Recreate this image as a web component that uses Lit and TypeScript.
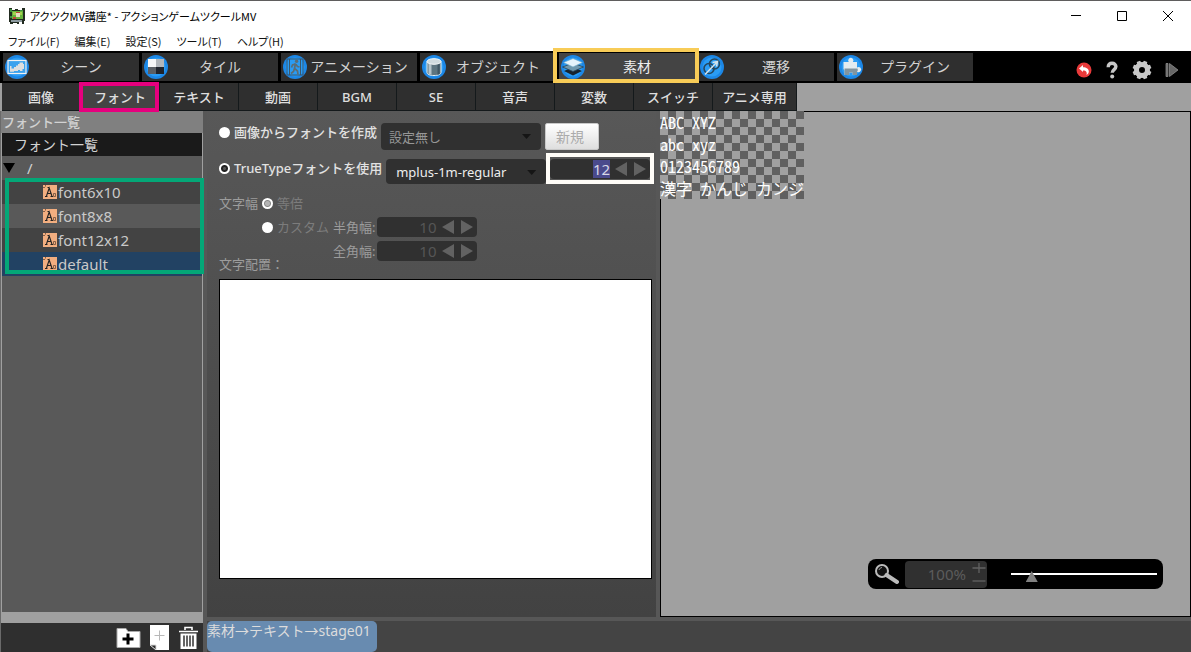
import { LitElement, html, css, svg, TemplateResult } from "lit";
import { customElement, state, query } from "lit/decorators.js";
import { classMap } from "lit/directives/class-map.js";

const disc = (art: unknown) => html`
  <svg class="tab-icon" width="24" height="24" viewBox="0 0 24 24" aria-hidden="true">
    <circle cx="12" cy="12" r="12" fill="#1c87e6" />
    <circle cx="12" cy="12" r="9.5" fill="#2a9cf4" />
    ${art}
  </svg>
`;

const sceneIcon = disc(svg`
  <rect x="3" y="5.500" width="18" height="13" fill="#3ba2ee" stroke="#f2f2f2" stroke-width="1.200" />
  <path d="M5 11h1.500v2.500H9V12h2v-1.500h2V9h1.500V7.500H18V9h1v5h-1.500v2H15v-1h-2v1H9v.800H5z" fill="#dedede" />
`);
const tileIcon = disc(svg`
  <rect x="4" y="4" width="8" height="8" fill="#f6f6f6" />
  <rect x="12" y="4" width="8" height="8" fill="#b2b6ba" />
  <rect x="4" y="12" width="8" height="7" fill="#5b5f64" />
  <rect x="12" y="12" width="8" height="7" fill="#20242b" />
`);
const animeIcon = disc(svg`
  <path d="M4 4h16v16H4zM6.500 4v16M17.500 4v16" fill="none" stroke="#3a586e" stroke-width="1" />
  <circle cx="13.600" cy="6.200" r="1.700" fill="#5b6d76" />
  <path d="M12.500 8.500l-1 5 3 2.500.5 3.500M11.500 13.500l-1 3-2.500 2M12.500 9l-3 1-1 2.500M13 9.500l1.500 2 2 .3" fill="none" stroke="#5b6d76" stroke-width="1.700" />
`);
const objectIcon = disc(svg`
  <path d="M5 6.500v11c0 1.800 3 3 7 3s7-1.200 7-3v-11z" fill="#5d7580" stroke="#e4edf0" stroke-width="1" />
  <path d="M6.500 8.500v10.300l3 .9V9.500z" fill="#b4c3ca" />
  <path d="M15.500 9v11l2.200-1V8.500z" fill="#3f5663" />
  <ellipse cx="12" cy="6.500" rx="7" ry="2.800" fill="#cfdade" stroke="#f5f9fa" stroke-width="1" />
`);
const materialIcon = disc(svg`
  <path d="M3 16l9-4 9 4-9 4.500z" fill="#17242f" />
  <path d="M1.500 12L12 8l10.500 4L12 16.500z" fill="#6f98ad" stroke="#24435a" stroke-width=".8" />
  <path d="M2.500 7.500L12 3.500l9.500 4L12 12z" fill="#e4f3fb" stroke="#6aa5c2" stroke-width=".6" />
`);
const transitionIcon = disc(svg`
  <circle cx="14.500" cy="9" r="5" fill="none" stroke="#25465e" stroke-width="1.600" />
  <circle cx="9" cy="13.500" r="5" fill="none" stroke="#25465e" stroke-width="1.600" />
  <path d="M5 19.500L17 7M12.500 7.500L17.500 6.500l-1 5" fill="none" stroke="#d3e2eb" stroke-width="1.500" />
`);
const pluginIcon = disc(svg`
  <path d="M4.500 7h5.200a2.600 2.600 0 1 1 4.200 0H18v5.500a2.600 2.600 0 1 1 0 4.200V20h-4.300v-2.500h-3.500V20H5.500v-4.500l-1-1.500z" fill="#e4ecef" />
  <path d="M5.500 13.500H18.500a2.600 2.600 0 0 1-.5 3.200V20h-4.300v-2.500h-3.500V20H5.500z" fill="#8195a0" />
`);

interface MainTab {
  label: string;
  icon: TemplateResult;
}

const mainTabs: MainTab[] = [
  { label: "シーン", icon: sceneIcon },
  { label: "タイル", icon: tileIcon },
  { label: "アニメーション", icon: animeIcon },
  { label: "オブジェクト", icon: objectIcon },
  { label: "素材", icon: materialIcon },
  { label: "遷移", icon: transitionIcon },
  { label: "プラグイン", icon: pluginIcon },
];

const subTabs = ["画像", "フォント", "テキスト", "動画", "BGM", "SE", "音声", "変数", "スイッチ", "アニメ専用"];
const menus = ["ファイル(F)", "編集(E)", "設定(S)", "ツール(T)", "ヘルプ(H)"];
const fonts = ["font6x10", "font8x8", "font12x12", "default"];

const controlReset = css`
  * {
    box-sizing: border-box;
  }
  button,
  input,
  select {
    margin: 0;
    padding: 0;
    border: 0;
    background: none;
    font: inherit;
    color: inherit;
    opacity: 1;
  }
  svg {
    display: block;
    flex: none;
  }
`;

@customElement("number-spinner")
class NumberSpinner extends LitElement {
  static properties = {
    value: { type: String },
    label: { type: String },
    disabled: { type: Boolean },
    preselect: { type: Boolean },
  };
  declare value: string;
  declare label: string;
  declare disabled: boolean;
  declare preselect: boolean;

  static styles = [
    controlReset,
    css`
      :host {
        display: block;
        width: 100px;
      }
      .spin {
        display: flex;
        align-items: center;
        height: 20px;
        padding-right: 4px;
        border-radius: 4px;
        background: #303030;
        color: #565656;
      }
      .field {
        flex: 1;
        min-width: 0;
        height: 18px;
        line-height: 18px;
        font-size: 15px;
        text-align: right;
        margin-right: 5px;
        outline: none;
      }
      .active {
        color: #d8d8e8;
      }
      .field::selection {
        background: #4a4a8c;
        color: #d8d8e8;
      }
      .step {
        width: 12px;
        height: 14px;
        color: #626262;
      }
      .next {
        margin-left: 7px;
      }
    `,
  ];

  @query(".field") field!: HTMLInputElement;

  firstUpdated() {
    if (this.preselect) {
      this.field.focus();
      this.field.select();
    }
  }

  render() {
    return html`
      <div class="spin">
        <input
          class=${classMap({ field: true, active: !this.disabled })}
          type="text"
          inputmode="numeric"
          aria-label=${this.label}
          .value=${this.value}
          ?disabled=${this.disabled}
        />
        <button class="step" type="button" aria-label="減らす" ?disabled=${this.disabled}>
          <svg width="12" height="14" viewBox="0 0 12 14"><path d="M12 0v14L0 7z" fill="currentColor" /></svg>
        </button>
        <button class="step next" type="button" aria-label="増やす" ?disabled=${this.disabled}>
          <svg width="12" height="14" viewBox="0 0 12 14"><path d="M0 0v14l12-7z" fill="currentColor" /></svg>
        </button>
      </div>
    `;
  }
}

@customElement("app-root")
class AppRoot extends LitElement {
  @state() mainTab = 4;
  @state() subTab = 1;
  @state() selectedFont = 3;

  static styles = [
    controlReset,
    css`
      :host {
        display: flex;
        flex-direction: column;
        height: 100vh;
        overflow: hidden;
        background: #575757;
        color: #d2d2d2;
        font-family: "Noto Sans", "Noto Sans CJK JP", sans-serif;
        font-size: 13px;
        line-height: 20px;
      }

      .titlebar {
        display: flex;
        align-items: center;
        flex: none;
        height: 31px;
        padding-left: 9px;
        border-top: 1px solid #5f5d5d;
        background: #fff;
        color: #000;
      }
      .title {
        flex: 1;
        margin: 0 0 0 5px;
        font-family: "Noto Sans CJK JP", sans-serif;
        font-size: 11px;
        font-weight: 400;
        font-feature-settings: "palt";
      }
      .window-button {
        display: grid;
        place-items: center;
        width: 46px;
        height: 30px;
      }
      .menubar {
        display: flex;
        flex: none;
        gap: 15px;
        height: 20px;
        padding-left: 8px;
        background: #fff;
        color: #111;
        font-family: "Noto Sans CJK JP", sans-serif;
        font-size: 11px;
        font-feature-settings: "palt";
      }

      .toolbar {
        display: flex;
        flex: none;
        gap: 3px;
        height: 32px;
        padding: 2px 12px 2px 3px;
        background: #000;
      }
      .main-tab {
        position: relative;
        display: flex;
        align-items: center;
        flex: 0 1 136px;
        height: 28px;
        padding-left: 2px;
        background: #2f2f2f;
        font-size: 14px;
        white-space: nowrap;
      }
      .main-tab.on {
        z-index: 1;
        background: #444;
        color: #eee;
      }
      .main-tab.on::after {
        content: "";
        position: absolute;
        inset: -5px -4px -2px -6px;
        border: 4px solid #f8cc57;
      }
      .main-tab .tab-icon {
        margin-right: -6px;
      }
      .tab-label {
        flex: 1;
        text-align: center;
      }
      .tools {
        display: flex;
        align-items: center;
        gap: 13px;
        margin-left: auto;
        padding-top: 6px;
      }

      .subtabs {
        display: flex;
        flex: none;
        height: 28px;
        padding-left: 2px;
        background: #a0a0a0;
      }
      .sub-tab {
        position: relative;
        flex: 0 1 79px;
        background: #2f2f2f;
        border-right: 1px solid #14191b;
        border-bottom: 1px solid #14191b;
        font-weight: 500;
        color: #dedede;
        white-space: nowrap;
      }
      .sub-tab:last-child {
        flex-basis: 84px;
      }
      .sub-tab.on {
        z-index: 1;
        background: #444;
      }
      .sub-tab.on::after {
        content: "";
        position: absolute;
        inset: -1px 0 -2px -2px;
        border: 4px solid #e6007e;
      }

      .workspace {
        display: grid;
        grid-template-columns: 203px 457px minmax(0, 1fr);
        grid-template-rows: minmax(0, 1fr) auto;
        flex: 1;
        min-height: 0;
      }

      .browser {
        display: flex;
        flex-direction: column;
        grid-row: 1 / 3;
        border-left: 1px solid #6a6a6a;
      }
      .browser-title {
        margin: 0;
        height: 22px;
        padding-left: 1px;
        background: #808080;
        font-size: 13px;
        font-weight: 500;
        line-height: 22px;
      }
      .browser-body {
        flex: 1;
        border: solid #a0a0a0;
        border-width: 0 1px 11px 1px;
        background: #595959;
      }
      .list-title {
        height: 23px;
        padding-left: 12px;
        background: #1a1a1a;
        font-size: 14px;
        line-height: 23px;
      }
      .folder {
        display: flex;
        align-items: center;
        gap: 12px;
        width: 100%;
        height: 24px;
        padding-left: 1px;
        font-size: 15px;
      }
      .files {
        position: relative;
        margin: 0;
        padding: 0;
        list-style: none;
      }
      .files::after {
        content: "";
        position: absolute;
        inset: -2px -2px 2px 3px;
        border: 4px solid #04a777;
        pointer-events: none;
      }
      .file {
        display: flex;
        align-items: center;
        gap: 1px;
        width: 100%;
        height: 24px;
        padding: 0 0 1px 41px;
        background: #434343;
        font-size: 15px;
        color: #c9c9c9;
      }
      .files li:nth-child(even) .file {
        background: #595959;
      }
      .files li .file.on {
        background: #224263;
      }
      .browser-tools {
        display: flex;
        align-items: center;
        justify-content: flex-end;
        gap: 9px;
        flex: none;
        height: 29px;
        padding-right: 4px;
        background: #2f2f2f;
      }

      .center {
        display: flex;
        flex-direction: column;
        min-height: 0;
        padding: 0 4px;
      }
      .editor {
        display: flex;
        flex-direction: column;
        flex: 1;
        padding: 12px 4px 38px 12px;
        background: linear-gradient(#585858, #424242);
      }
      .row {
        display: flex;
        align-items: flex-start;
        gap: 4px;
      }
      .row + .row {
        margin-top: 9px;
      }
      .choice {
        display: flex;
        align-items: center;
        gap: 4px;
        height: 18px;
        white-space: nowrap;
      }
      .strong {
        font-weight: 500;
        color: #e2e2e2;
      }
      .radio {
        appearance: none;
        flex: none;
        width: 11px;
        height: 11px;
        border-radius: 50%;
        background: #fff;
      }
      .radio:checked {
        background: radial-gradient(circle, #555 0 1px, #222 2px 3px, #fff 4px);
      }
      .radio:checked:disabled {
        background: radial-gradient(circle, #b4b4b4 0 2px, #888 3px, #fff 4px);
      }
      .picker {
        position: relative;
        flex: none;
        width: 160px;
      }
      .picker::after {
        content: "";
        position: absolute;
        right: 10px;
        top: 11px;
        width: 9px;
        height: 5px;
        background: #151515;
        clip-path: polygon(0 0, 100% 0, 50% 100%);
        pointer-events: none;
      }
      .select {
        appearance: none;
        display: block;
        width: 100%;
        height: 27px;
        padding: 0 24px 0 8px;
        border-radius: 4px;
        background: #303030;
        color: #969696;
      }
      .select.live {
        height: 25px;
        padding-left: 10px;
        color: #eee;
      }
      .new {
        width: 54px;
        height: 27px;
        padding-right: 4px;
        border: 1px solid #c9c9c9;
        border-radius: 2px;
        background: linear-gradient(#fff, #dedede);
        color: #ababab;
        font-size: 14px;
      }
      .marked {
        position: relative;
      }
      .marked::after {
        content: "";
        position: absolute;
        inset: -6px -4px -5px -4px;
        border: 4px solid #fffdf8;
        pointer-events: none;
      }
      .widths {
        display: grid;
        grid-template-columns: auto auto auto auto;
        grid-auto-rows: 20px;
        align-items: center;
        justify-content: start;
        row-gap: 4px;
        margin-top: 9px;
        color: #9c9c9c;
      }
      .widths .choice {
        margin: 0 4px;
        color: #7c7c7c;
      }
      .col-two {
        grid-column: 2;
      }
      .col-three {
        grid-column: 3;
        padding-right: 1px;
      }
      .layout-title {
        margin: -7px 0 5px;
        color: #9c9c9c;
      }
      .layout-area {
        flex: 1;
        min-height: 0;
        border: 1px solid #000;
        background: #fff;
      }
      .preview {
        position: relative;
        min-height: 0;
        border: 1px solid #000;
        background: #a0a0a0;
      }
      .sample {
        position: absolute;
        left: -1px;
        top: -1px;
        width: 144px;
        height: 88px;
        background: repeating-conic-gradient(#606060 0 25%, #a0a0a0 0 50%) 0 0 / 16px 16px;
        color: #fff;
        font-family: "Noto Sans CJK JP", sans-serif;
        font-feature-settings: "hwid";
        font-size: 16px;
        line-height: 22px;
        white-space: nowrap;
      }
      .sample p {
        display: flex;
        gap: 8px;
        margin: 0;
        height: 22px;
      }
      .sample .kana {
        font-feature-settings: normal;
      }
      .zoombar {
        position: absolute;
        right: 27px;
        bottom: 27px;
        display: flex;
        align-items: center;
        width: 295px;
        height: 30px;
        padding: 0 6px;
        border-radius: 8px;
        background: #000;
      }
      .zoom-field {
        display: flex;
        flex: none;
        width: 82px;
        height: 27px;
        margin: 0 24px 0 6px;
        border-radius: 4px;
        background: #303030;
        color: #5c5c5c;
      }
      .zoom-value {
        width: 61px;
        margin-right: 6px;
        text-align: right;
        font-size: 15px;
      }
      .zoom-steps {
        display: flex;
        flex-direction: column;
      }
      .zoom-slider {
        appearance: none;
        flex: 1;
        min-width: 0;
        height: 24px;
      }
      .zoom-slider::-webkit-slider-runnable-track {
        height: 2px;
        background: #fff;
      }
      .zoom-slider::-webkit-slider-thumb {
        appearance: none;
        width: 12px;
        height: 11px;
        margin-top: -2px;
        background: #808080;
        clip-path: polygon(50% 0, 100% 100%, 0 100%);
      }
      .status {
        grid-column: 2 / -1;
        margin: 4px 0 0 4px;
        height: 31px;
        background: #444;
      }
      .toast {
        display: inline-block;
        height: 31px;
        padding: 0 6px 0 0;
        border-radius: 5px;
        background: #688bb0;
        color: #dcdcdc;
        font-size: 14px;
      }
    `,
  ];

  renderTitlebar() {
    return html`
      <header class="titlebar">
        <svg width="16" height="16" viewBox="0 0 16 16" aria-hidden="true">
          <path d="M0 0h3v2h3V1h3v1h4V0h3v13h-1v3h-2v-2h-3v2H8v-1H4v1H1v-2H0z" fill="#222b20" />
          <path d="M1 1h2v3H1zM11 2h3v2h-3zM1 8h2v2H1z" fill="#3e8e3d" />
          <path d="M3 3h11v8H3z" fill="#67b53d" />
          <path d="M4 4h9v3H4z" fill="#a3d14f" />
          <path d="M7 5h4v4H7z" fill="#e8dcc1" />
          <path d="M7 4h4v1H7zM4 9h3v2H4z" fill="#bd4734" />
          <path d="M2 12h11v2H2z" fill="#8d9aa0" />
        </svg>
        <h1 class="title">アクツクMV講座* - アクションゲームツクールMV</h1>
        <button class="window-button" type="button" aria-label="最小化">
          <svg width="10" height="10" viewBox="0 0 10 10"><path d="M0 4.500h10" stroke="#000" /></svg>
        </button>
        <button class="window-button" type="button" aria-label="最大化">
          <svg width="10" height="10" viewBox="0 0 10 10"><path d="M.5.5h9v9h-9z" fill="none" stroke="#000" /></svg>
        </button>
        <button class="window-button" type="button" aria-label="閉じる">
          <svg width="10" height="10" viewBox="0 0 10 10"><path d="M0 0l10 10M10 0L0 10" stroke="#000" /></svg>
        </button>
      </header>
      <nav class="menubar">${menus.map((m) => html`<button type="button">${m}</button>`)}</nav>
    `;
  }

  renderToolbar() {
    return html`
      <nav class="toolbar">
        ${mainTabs.map(
          (tab, i) => html`
            <button
              type="button"
              class=${classMap({ "main-tab": true, on: i === this.mainTab })}
              @click=${() => (this.mainTab = i)}
            >
              ${tab.icon}<span class="tab-label">${tab.label}</span>
            </button>
          `
        )}
        <div class="tools">
          <button type="button" aria-label="元に戻す">
            <svg width="16" height="16" viewBox="0 0 16 16">
              <circle cx="8" cy="8" r="7.500" fill="#e93a3a" />
              <path d="M3 6.500L7 3v2.200c3.500 0 5.800 1.600 5.800 4.300 0 1.500-.8 2.700-2.300 3.500.8-2.500-.2-4.500-3.500-4.500V10z" fill="#fff" />
            </svg>
          </button>
          <button type="button" aria-label="ヘルプ">
            <svg width="14" height="18" viewBox="0 0 14 18">
              <path d="M3.200 6.200C3.200 3.600 4.600 2.300 7 2.300s3.900 1.300 3.900 3.300c0 3-3.700 3-3.700 6.200" fill="none" stroke="#c8c8c8" stroke-width="3.400" />
              <circle cx="7.200" cy="15.400" r="2" fill="#c8c8c8" />
            </svg>
          </button>
          <button type="button" aria-label="環境設定">
            <svg width="20" height="20" viewBox="0 0 20 20">
              <circle cx="10" cy="10" r="5.500" fill="none" stroke="#c8c8c8" stroke-width="5" />
              <g fill="#c8c8c8">
                ${[0, 45, 90, 135, 180, 225, 270, 315].map(
                  (a) => svg`<path d="M7.600 4L8.200.600h3.600l.6 3.400z" transform="rotate(${a + 22.5} 10 10)" />`
                )}
              </g>
            </svg>
          </button>
          <button type="button" aria-label="テストプレイ">
            <svg width="14" height="14" viewBox="0 0 14 14">
              <path d="M1 .5h2v13H1zM4.500.500L13 7l-8.500 6.500z" fill="#666" stroke="#999" stroke-width=".7" />
            </svg>
          </button>
        </div>
      </nav>
      <nav class="subtabs">
        ${subTabs.map(
          (label, i) => html`
            <button
              type="button"
              class=${classMap({ "sub-tab": true, on: i === this.subTab })}
              @click=${() => (this.subTab = i)}
            >
              ${label}
            </button>
          `
        )}
      </nav>
    `;
  }

  renderBrowser() {
    return html`
      <aside class="browser">
        <h2 class="browser-title">フォント一覧</h2>
        <div class="browser-body">
          <div class="list-title">フォント一覧</div>
          <button class="folder" type="button">
            <svg width="12" height="10" viewBox="0 0 12 10"><path d="M0 0h12L6 10z" fill="#000" /></svg>
            <span>/</span>
          </button>
          <ul class="files">
            ${fonts.map(
              (name, i) => html`
                <li>
                  <button
                    type="button"
                    class=${classMap({ file: true, on: i === this.selectedFont })}
                    @click=${() => (this.selectedFont = i)}
                  >
                    <svg width="14" height="14" viewBox="0 0 14 14" aria-hidden="true">
                      <path d="M0 0h14v14H0z" fill="#f2ae80" />
                      <path d="M2 11.500h2.500M7.500 11.500H10M3.500 11L6.200 3l2.700 8M4.500 8.500h3.500M4.500 2.500h2" fill="none" stroke="#222" stroke-width="1.100" />
                      <path d="M10.500 8.500h2v3h-2zM0 2.500h2M2.500 0v1.500" fill="none" stroke="#6b4b38" stroke-width=".8" />
                    </svg>
                    <span>${name}</span>
                  </button>
                </li>
              `
            )}
          </ul>
        </div>
        <div class="browser-tools">
          <button type="button" aria-label="フォルダを追加">
            <svg width="25" height="22" viewBox="0 0 25 22">
              <path d="M1 1.500h9l2 3h12v16H1z" fill="#fff" stroke="#aaa" />
              <path d="M12 6.500v11M6.500 12h11" stroke="#000" stroke-width="3" />
            </svg>
          </button>
          <button type="button" aria-label="フォントを追加">
            <svg width="19" height="25" viewBox="0 0 19 25">
              <path d="M0 0h19v25H6L0 20z" fill="#fff" />
              <path d="M0 20h6v5z" fill="#2f2f2f" stroke="#ddd" />
              <path d="M9.500 5.500v10M4.500 10.500h10" stroke="#b8b8b8" />
            </svg>
          </button>
          <button type="button" aria-label="削除">
            <svg width="21" height="24" viewBox="0 0 21 24">
              <path d="M7 4V1.500h7V4M1 5.500h19" fill="none" stroke="#fff" stroke-width="1.600" />
              <path d="M2.500 7.500h16V23h-16z" fill="#fff" />
              <path d="M6 9.500v11M9 9.500v11M12 9.500v11M15 9.500v11" stroke="#333" stroke-width="1.500" />
            </svg>
          </button>
        </div>
      </aside>
    `;
  }

  renderEditor() {
    return html`
      <main class="center">
        <div class="editor">
          <div class="row">
            <label class="choice strong"><input class="radio" type="radio" name="source" />画像からフォントを作成</label>
            <div class="picker">
              <select class="select" aria-label="画像" disabled>
                <option>設定無し</option>
              </select>
            </div>
            <button class="new" type="button" disabled>新規</button>
          </div>
          <div class="row">
            <label class="choice strong"><input class="radio" type="radio" name="source" checked />TrueTypeフォントを使用</label>
            <div class="picker">
              <select class="select live" aria-label="フォント">
                <option>mplus-1m-regular</option>
              </select>
            </div>
            <div class="marked">
              <number-spinner label="サイズ" value="12" preselect></number-spinner>
            </div>
          </div>
          <div class="widths">
            <span>文字幅</span>
            <label class="choice"><input class="radio" type="radio" name="width" checked disabled />等倍</label>
            <label class="choice col-two"><input class="radio" type="radio" name="width" disabled />カスタム</label>
            <span class="col-three">半角幅:</span>
            <number-spinner label="半角幅" value="10" disabled></number-spinner>
            <span class="col-three">全角幅:</span>
            <number-spinner label="全角幅" value="10" disabled></number-spinner>
          </div>
          <div class="layout-title">文字配置：</div>
          <div class="layout-area"></div>
        </div>
      </main>
    `;
  }

  renderPreview() {
    return html`
      <section class="preview">
        <div class="sample">
          <p><span>ABC</span><span>XYZ</span></p>
          <p><span>abc</span><span>xyz</span></p>
          <p>0123456789</p>
          <p class="kana"><span>漢字</span><span>かんじ</span><span>カンジ</span></p>
        </div>
        <div class="zoombar">
          <svg width="25" height="22" viewBox="0 0 25 22" aria-hidden="true">
            <circle cx="8" cy="8" r="6" fill="#111" stroke="#bbb" stroke-width="2" />
            <path d="M5 7c.5-1.500 1.500-2.300 3-2.500" fill="none" stroke="#999" />
            <path d="M12.500 12L23 19" stroke="#bbb" stroke-width="4" stroke-linecap="round" />
          </svg>
          <div class="zoom-field">
            <input class="zoom-value" type="text" aria-label="倍率" value="100%" disabled />
            <div class="zoom-steps">
              <button type="button" aria-label="拡大">
                <svg width="14" height="13" viewBox="0 0 14 13"><path d="M7 2v10M.5 7h13" stroke="#626262" stroke-width="1.300" /></svg>
              </button>
              <button type="button" aria-label="縮小">
                <svg width="14" height="13" viewBox="0 0 14 13"><path d="M.5 7h13" stroke="#626262" stroke-width="1.300" /></svg>
              </button>
            </div>
          </div>
          <input class="zoom-slider" type="range" aria-label="ズーム" min="0" max="100" value="11" />
        </div>
      </section>
    `;
  }

  render() {
    return html`
      ${this.renderTitlebar()} ${this.renderToolbar()}
      <div class="workspace">
        ${this.renderBrowser()} ${this.renderEditor()} ${this.renderPreview()}
        <footer class="status"><span class="toast">素材→テキスト→stage01</span></footer>
      </div>
    `;
  }
}
